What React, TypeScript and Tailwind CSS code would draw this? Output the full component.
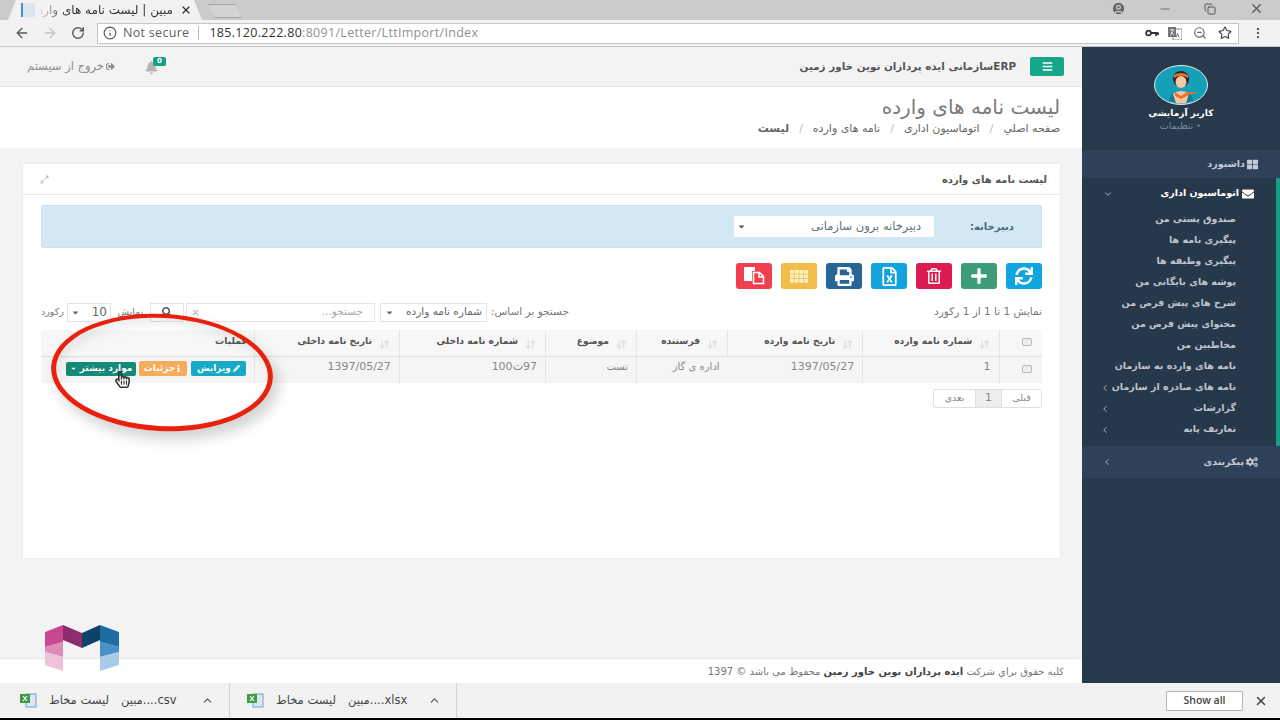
import { ArrowDownUp, ArrowLeft, ArrowRight, ChevronDown, ChevronLeft, ChevronUp, CircleUser, Copy, EllipsisVertical, Info, Minus, RotateCw, Star, X, ZoomOut } from "lucide-react";
import {
  FaBars,
  FaBell,
  FaCaretDown,
  FaCogs,
  FaEnvelope,
  FaExpandAlt,
  FaInfo,
  FaPencilAlt,
  FaPlus,
  FaPrint,
  FaRegFileExcel,
  FaRegHandPointer,
  FaRegTrashAlt,
  FaSearch,
  FaSignOutAlt,
  FaSync,
  FaThLarge,
  FaTimes,
} from "react-icons/fa";

const subMenu = [
  { label: "صندوق پستی من" },
  { label: "پیگیری نامه ها" },
  { label: "پیگیری وظیفه ها" },
  { label: "پوشه های بایگانی من" },
  { label: "شرح های پیش فرض من" },
  { label: "محتوای پیش فرض من" },
  { label: "مخاطبین من" },
  { label: "نامه های وارده به سازمان" },
  { label: "نامه های صادره از سازمان", arrow: true },
  { label: "گزارشات", arrow: true },
  { label: "تعاریف پایه", arrow: true },
];

const columns = [
  { label: "عملیات", width: "w-[213px]", sort: false },
  { label: "تاریخ نامه داخلی", width: "w-[145px]", sort: true },
  { label: "شماره نامه داخلی", width: "w-[146px]", sort: true },
  { label: "موضوع", width: "w-[91px]", sort: true },
  { label: "فرستنده", width: "w-[91px]", sort: true },
  { label: "تاریخ نامه وارده", width: "w-[135px]", sort: true },
  { label: "شماره نامه وارده", width: "w-[137px]", sort: true },
];

const PasteIcon = () => (
  <svg width="22" height="18" viewBox="0 0 22 18">
    <path d="M1 0h11v4h-3v10H1z" fill="#fff" />
    <path d="M10.5 5.5h6l4 4v7h-10z" fill="none" stroke="#fff" strokeWidth="1.6" />
    <path d="M16 5v5h5" fill="none" stroke="#fff" strokeWidth="1.4" />
  </svg>
);

const GridIcon = () => (
  <svg width="18" height="13" viewBox="0 0 18 13" fill="#fdf0c4">
    {[0, 4.5, 9].map((y) =>
      [0, 4.7, 9.4, 14.1].map((x) => <rect key={`${x}-${y}`} x={x} y={y} width="3.9" height="3.7" />),
    )}
  </svg>
);

const toolButtons = [
  { icon: <PasteIcon />, color: "bg-[#f0404f]" },
  { icon: <GridIcon />, color: "bg-[#f2be49]" },
  { icon: <FaPrint size={19} />, color: "bg-[#266596]" },
  { icon: <FaRegFileExcel size={19} />, color: "bg-[#12a3df]" },
  { icon: <FaRegTrashAlt size={16} />, color: "bg-[#dc1c50]" },
  { icon: <FaPlus size={18} />, color: "bg-[#3d9c78]" },
  { icon: <FaSync size={18} />, color: "bg-[#0fa5e0]" },
];

const Checkbox = () => <span className="ml-[12px] inline-block h-[8px] w-[10px] rounded-[2px] border border-[#b8b8b8] bg-[#eeeeee]" />;

const ExcelIcon = () => (
  <svg width="17" height="15" viewBox="0 0 17 15">
    <rect x="6" y="1" width="10" height="13" fill="#dbe8f3" stroke="#7b9cba" />
    <rect x="0" y="1" width="10" height="9" fill="#3f9c46" />
    <path d="M3 3l4 5M7 3l-4 5" stroke="#fff" strokeWidth="1.2" />
  </svg>
);

const KeyIcon = () => (
  <svg width="14" height="8" viewBox="0 0 14 8" fill="none" stroke="#333" strokeWidth="1.8">
    <circle cx="3.5" cy="4" r="2.4" />
    <path d="M6 4h7.5M11 4v3M13 4v2" />
  </svg>
);

const TranslateIcon = () => (
  <svg width="14" height="13" viewBox="0 0 14 13">
    <rect x="5" y="2" width="9" height="11" fill="#fff" stroke="#888" />
    <rect x="0" y="0" width="8" height="10" fill="#777" />
    <path d="M2 3h4M4 2v1M2.5 8L5.5 3M3 5l3 3" stroke="#fff" strokeWidth="0.8" fill="none" />
    <path d="M8 10.5l1.5-4 1.5 4" stroke="#666" strokeWidth="0.9" fill="none" />
  </svg>
);

const Avatar = () => (
  <svg className="h-[40px] w-[54px]" viewBox="0 0 54 40" preserveAspectRatio="none">
    <ellipse cx="27" cy="20" rx="26.5" ry="19.5" fill="#15a0b8" stroke="#d5eef2" strokeWidth="1" />
    <ellipse cx="27" cy="14" rx="8" ry="8" fill="#2a2326" />
    <path d="M19.5 11c3-4 12-4 15 0l-1 2c-4-3-9-3-13 0z" fill="#e8742c" />
    <ellipse cx="27" cy="17" rx="5.5" ry="6" fill="#f6c7a6" />
    <path d="M16 37c1-8 6-11 11-11s10 3 11 11c-7 2-15 2-22 0z" fill="#f6c7a6" />
    <path d="M21 27l6 4 6-4 10 0-10 4-6 3-6-3z" fill="#e8742c" />
    <path d="M19 29c-3 1-4 4-4 7 3 1 5 2 7 2zM35 29c3 1 4 4 4 7-3 1-5 2-7 2z" fill="#0f7f96" />
  </svg>
);

const Logo = () => (
  <svg className="absolute left-[45px] top-[625px] h-[46px] w-[74px]" viewBox="0 0 74 46">
    <polygon points="0,7 18,0 18,17 0,22" fill="#c9478f" />
    <polygon points="0,22 18,17 18,32 0,27" fill="#de8bb9" />
    <polygon points="0,27 18,32 18,46 0,40" fill="#efc2da" />
    <polygon points="18,0 37,8 37,23 18,15" fill="#8c2e6e" />
    <polygon points="37,8 55,0 55,15 37,23" fill="#0e4269" />
    <polygon points="55,0 74,7 74,22 55,17" fill="#1f6ca3" />
    <polygon points="55,17 74,22 74,27 55,32" fill="#4a90c9" />
    <polygon points="55,32 74,27 74,40 55,46" fill="#a9cbe9" />
  </svg>
);

const BrowserTop = () => (
  <>
    <div className="flex h-[20px] items-end bg-[#cbcbcb] pl-[8px]">
      <div className="flex h-[20px] w-[194px] items-center bg-[#f2f2f2] pl-[13px] pr-[10px] [clip-path:polygon(0_100%,8px_0,186px_0,100%_100%)]">
        <span className="h-[14px] w-[14px] shrink-0 border-l-2 border-[#4b8fd0] bg-[#dde6ee]" />
        <span dir="rtl" className="ml-[2px] flex-1 overflow-hidden whitespace-nowrap text-[12px] text-[#333] [mask-image:linear-gradient(to_right,transparent,black_30px)]">
          مبین | لیست نامه های وارده
        </span>
        <X size={12} strokeWidth={2.5} className="ml-[7px] shrink-0 text-[#333]" />
      </div>
      <div className="ml-[6px] mb-[2px] h-[14px] w-[34px] border border-[#a8a8a8] bg-[#d2d2d2] [clip-path:polygon(0_0,80%_0,100%_100%,20%_100%)]" />
      <div className="flex-1" />
      <div className="mb-[4px] flex w-[172px] items-center text-[#555]">
        <CircleUser size={15} fill="#666" stroke="#cbcbcb" className="ml-[3px]" />
        <Minus size={14} className="ml-[32px] text-[#777]" />
        <Copy size={12} className="ml-[32px]" />
        <X size={15} className="ml-[33px]" />
      </div>
    </div>
    <div className="flex h-[27px] items-center border-b border-[#c8c8c8] bg-[#f2f2f2] pl-[14px]">
      <ArrowLeft size={16} className="text-[#5a5a5a]" />
      <ArrowRight size={16} className="ml-[12px] text-[#c6c6c6]" />
      <RotateCw size={14} strokeWidth={2.5} className="ml-[13px] text-[#5a5a5a]" />
      <div className="ml-[12px] flex h-[21px] w-[1142px] items-center border border-[#c6c6c6] bg-white pl-[5px] pr-[6px] font-['Open_Sans',sans-serif] text-[12.5px] tracking-[0.3px]">
        <Info size={14} className="text-[#555]" />
        <span className="ml-[6px] text-[#5f5f5f]">Not secure</span>
        <span className="ml-[9px] h-[14px] w-px bg-[#bbbbbb]" />
        <span className="ml-[10px] text-[#333]">185.120.222.80</span>
        <span className="text-[#909090]">:8091/Letter/LttImport/Index</span>
        <div className="flex-1" />
        <KeyIcon />
        <span className="ml-[9px] flex"><TranslateIcon /></span>
        <ZoomOut size={14} className="ml-[11px] text-[#666]" />
        <Star size={14} className="ml-[11px] text-[#444]" />
      </div>
      <EllipsisVertical size={14} className="ml-[12px] text-[#555]" />
    </div>
  </>
);

const Sidebar = () => (
  <aside dir="rtl" className="flex w-[198px] shrink-0 flex-col bg-[#28394c] text-[9.5px]">
    <div className="flex h-[103px] flex-col items-center pt-[18px]">
      <Avatar />
      <div className="mt-[2px] text-[9px] font-bold leading-[13px] text-white">کاربر آزمایشی</div>
      <div className="flex items-center gap-[2px] text-[9.5px] leading-[11px] text-[#7e8a99]">
        <FaCaretDown size={7} /> تنظیمات
      </div>
    </div>
    <div className="flex h-[28px] items-center bg-[#2f4059] pr-[22px] font-semibold text-[#c3cad3]">
      <FaThLarge size={11} className="ml-[2px]" /> داشبورد
    </div>
    <div className="flex h-[268px] flex-col border-r-[4px] border-[#14a085] bg-[#27384a]">
      <div className="flex h-[31px] shrink-0 items-center justify-between pl-[21px] pr-[22px] font-bold text-white">
        <span className="flex items-center gap-[3px]">
          <FaEnvelope size={12} /> اتوماسیون اداری
        </span>
        <ChevronDown size={10} className="text-[#c3cad3]" />
      </div>
      {subMenu.map((item) => (
        <div key={item.label} className="flex h-[21px] shrink-0 items-center justify-between pl-[18px] pr-[40px] font-semibold whitespace-nowrap text-[#bcc4ce]">
          <span>{item.label}</span>
          {item.arrow && <ChevronLeft size={10} />}
        </div>
      ))}
    </div>
    <div className="flex h-[32px] items-center justify-between bg-[#2f4059] pl-[20px] pr-[22px] font-semibold text-[#c3cad3]">
      <span className="flex items-center gap-[2px]">
        <FaCogs size={12} /> پیکربندی
      </span>
      <ChevronLeft size={10} />
    </div>
  </aside>
);

const TopNav = () => (
  <div className="flex h-[40px] items-center border-b border-[#e4e4e4] bg-[#f3f3f3] pl-[27px] pr-[18px]">
    <div className="flex items-center gap-[2px] text-[11.5px] text-[#8d8d8d]">
      <span>خروج از سیستم</span>
      <FaSignOutAlt size={9} />
    </div>
    <div className="relative ml-[30px] mt-[1px] text-[#b5b5b5]">
      <FaBell size={13} />
      <span className="absolute -right-[8px] -top-[4px] flex h-[9px] w-[13px] items-center justify-center rounded-[2px] bg-[#14a085] text-[7px] font-bold text-white">0</span>
    </div>
    <div className="flex-1" />
    <span dir="rtl" className="text-[10.4px] font-semibold text-[#555]">ERPسازمانی ایده پردازان نوین خاور زمین</span>
    <button className="ml-[14px] flex h-[19px] w-[34px] items-center justify-center rounded-[2px] bg-[#16a689] text-white">
      <FaBars size={11} />
    </button>
  </div>
);

const PageTitle = () => (
  <div dir="rtl" className="h-[61px] bg-white pr-[22px] pt-[8px]">
    <h1 className="text-[20px] leading-[24px] text-[#7b7b7b]">لیست نامه های وارده</h1>
    <div className="mt-[2px] flex items-center gap-[10px] text-[11px] text-[#666]">
      <span>صفحه اصلي</span>
      <span className="text-[#bbb]">/</span>
      <span>اتوماسیون اداری</span>
      <span className="text-[#bbb]">/</span>
      <span>نامه های وارده</span>
      <span className="text-[#bbb]">/</span>
      <span className="font-bold">لیست</span>
    </div>
  </div>
);

const Filters = () => (
  <div className="mt-[14px] flex h-[18px] items-center justify-between text-[10.5px] text-[#777]">
    <div className="flex items-center">
      <span className="w-[26px] text-[9.5px]">رکورد</span>
      <div className="flex h-[19px] w-[44px] items-center justify-between border border-[#e4e4e4] px-[3px] text-[#666]">
        <FaCaretDown size={9} />
        <span className="text-[12px]">10</span>
      </div>
      <span className="ml-[3px] w-[33px] text-center text-[9.5px]">نمایش</span>
      <div className="ml-[3px] flex h-[19px] w-[34px] items-center justify-center border border-[#e4e4e4]">
        <FaSearch size={10} className="text-[#555]" />
      </div>
      <div dir="rtl" className="ml-[2px] flex h-[19px] w-[189px] items-center justify-between border border-[#e4e4e4] px-[11px] text-[#aaa]">
        <span>جستجو...</span>
        <FaTimes size={9} className="-ml-[7px] text-[#ccc]" />
      </div>
      <div dir="rtl" className="ml-[5px] flex h-[19px] w-[107px] items-center justify-between border border-[#e4e4e4] px-[4px] text-[#666]">
        <span className="whitespace-nowrap">شماره نامه وارده</span>
        <FaCaretDown size={9} />
      </div>
      <span dir="rtl" className="ml-[4px] whitespace-nowrap text-[10.5px]">جستجو بر اساس:</span>
    </div>
    <span dir="rtl" className="whitespace-nowrap">نمایش 1 تا 1 از 1 رکورد</span>
  </div>
);

const DataTable = () => (
  <table dir="ltr" className="mt-[9px] w-[1001px] table-fixed border-collapse text-[11px] text-[#888]">
    <thead>
      <tr className="h-[26px] bg-[#f7f7f7]">
        {columns.map((col) => (
          <th key={col.label} className={`${col.width} border-r border-[#e6e6e6] p-0 align-top`}>
            <div dir="rtl" className={`flex pt-[4px] text-[9.2px] font-bold text-[#555] ${col.sort ? "pr-[9px]" : "pr-[6px]"}`}>
              {col.sort && <ArrowDownUp size={11} strokeWidth={2.5} className="ml-[7px] mt-[5px] text-[#dcdcdc]" />}
              <span className="whitespace-nowrap">{col.label}</span>
            </div>
          </th>
        ))}
        <th className="w-[42px] p-0 text-center">
          <Checkbox />
        </th>
      </tr>
    </thead>
    <tbody>
      <tr className="h-[27px] border-t border-[#dedede] bg-[#f5f5f5]">
        <td className="border-r border-[#e6e6e6] p-0">
          <div className="ml-[25px] flex items-center gap-[3px] pb-[2px] text-[9px] font-bold text-white">
            <span className="flex h-[14px] w-[70px] items-center justify-center gap-[3px] rounded-[2px] bg-[#148a78]">
              <FaCaretDown size={7} /> موارد بیشتر
            </span>
            <span className="flex h-[15px] w-[48px] items-center justify-center rounded-[2px] bg-[#f5ad5b]">
              جزئیات <FaInfo size={7} />
            </span>
            <span className="ml-[1px] flex h-[15px] w-[55px] items-center justify-center gap-[2px] rounded-[2px] bg-[#17a9c6]">
              ویرایش <FaPencilAlt size={7} />
            </span>
          </div>
        </td>
        <td className="border-r border-[#e6e6e6] p-0 pr-[8px] pb-[6px] text-right">1397/05/27</td>
        <td dir="rtl" className="border-l border-[#e6e6e6] p-0 pr-[8px] pb-[6px]">97ت100</td>
        <td dir="rtl" className="border-l border-[#e6e6e6] p-0 pr-[8px] pb-[6px] text-[10px]">تست</td>
        <td dir="rtl" className="border-l border-[#e6e6e6] p-0 pr-[8px] pb-[6px] text-[10px]">اداره ی گاز</td>
        <td className="border-r border-[#e6e6e6] p-0 pr-[8px] pb-[6px] text-right">1397/05/27</td>
        <td className="border-r border-[#e6e6e6] p-0 pr-[9px] pb-[6px] text-right">1</td>
        <td className="p-0 text-center">
          <Checkbox />
        </td>
      </tr>
    </tbody>
  </table>
);

const Card = () => (
  <section className="h-[394px] bg-white shadow-[0_0_2px_rgba(0,0,0,0.08)]">
    <div className="flex h-[31px] items-center justify-between border-b border-[#e8e8e8] pl-[17px] pr-[13px]">
      <FaExpandAlt size={9} className="text-[#c4c4c4]" />
      <span className="text-[10px] font-bold text-[#555]">لیست نامه های وارده</span>
    </div>
    <div className="px-[18px] pt-[10px]">
      <div className="flex h-[43px] items-center justify-end rounded-[2px] border border-[#c6e2ef] bg-[#d3e8f3] pr-[27px] text-[10px] font-semibold text-[#4a6a7a]">
        <div dir="rtl" className="mr-[36px] flex h-[21px] w-[200px] items-center justify-between bg-white pl-[3px] pr-[13px] text-[11.5px] font-normal text-[#5f6f78]">
          <span>دبیرخانه برون سازمانی</span>
          <FaCaretDown size={9} className="text-[#555]" />
        </div>
        <span dir="rtl">دبیرخانه:</span>
      </div>
      <div className="mt-[15px] flex justify-end gap-[9px]">
        {toolButtons.map((btn, i) => (
          <button key={i} className={`flex h-[26px] w-[36px] items-center justify-center rounded-[3px] text-white ${btn.color}`}>
            {btn.icon}
          </button>
        ))}
      </div>
      <Filters />
      <DataTable />
      <div className="mt-[6px] flex justify-end">
        <div dir="rtl" className="flex h-[19px] items-center rounded-[2px] border border-[#e0e0e0] text-[9.5px] text-[#888]">
          <span className="flex h-full w-[39px] items-center justify-center">قبلی</span>
          <span className="flex h-full w-[27px] items-center justify-center border-x border-[#e0e0e0] bg-[#eeeeee] text-[11px]">1</span>
          <span className="flex h-full w-[41px] items-center justify-center">بعدی</span>
        </div>
      </div>
    </div>
  </section>
);

const DownloadItem = ({ name }: { name: string }) => (
  <div className="flex h-[35px] w-[210px] items-center border-r border-[#d4d4d4] pr-[15px] text-[11.5px] text-[#444]">
    <ExcelIcon />
    <span dir="rtl" className="ml-[12px] whitespace-nowrap">لیست مخاط</span>
    <span dir="ltr" className="ml-[12px] whitespace-nowrap">{name}</span>
    <ChevronUp size={13} className="ml-auto text-[#555]" />
  </div>
);

const App = () => (
  <div className="relative flex h-[720px] w-[1280px] flex-col overflow-hidden bg-white font-['DejaVu_Sans',sans-serif]">
    <BrowserTop />
    <main className="flex h-[636px] shrink-0">
      <div className="flex w-[1082px] flex-col">
        <TopNav />
        <PageTitle />
        <div className="flex-1 bg-[#f3f3f3] pl-[23px] pr-[22px] pt-[16px]">
          <Card />
        </div>
        <footer dir="rtl" className="flex h-[25px] items-center border-t border-[#e6e6e6] bg-white pr-[18px] text-[10px] text-[#777]">
          کلیه حقوق براي شرکت&nbsp;<b className="text-[#444]">ایده پردازان نوین خاور زمین</b>&nbsp;محفوظ مي باشد © 1397
        </footer>
      </div>
      <Sidebar />
    </main>
    <div className="flex h-[35px] items-center bg-[#f2f2f2] pl-[20px] pr-[12px]">
      <DownloadItem name="مبین....csv" />
      <div className="w-[17px]" />
      <DownloadItem name="مبین....xlsx" />
      <div className="flex-1" />
      <button className="h-[20px] w-[77px] rounded-[1px] border border-[#b5b5b5] bg-white font-['Open_Sans',sans-serif] text-[10.5px] font-semibold text-[#444]">Show all</button>
      <X size={14} strokeWidth={2.5} className="ml-[11px] text-[#444]" />
    </div>
    <div className="h-[2px] bg-black" />

    {/* red marker drawn over the video */}
    <div className="pointer-events-none absolute left-[51px] top-[314px] h-[117px] w-[222px] rotate-[3deg] rounded-[50%] border-[5px] border-t-[4px] border-[#e8210f] shadow-[6px_8px_14px_rgba(0,0,0,0.18),inset_3px_6px_12px_rgba(0,0,0,0.08)]" />
    <FaRegHandPointer size={17} className="absolute left-[114px] top-[371px] text-[#333]" />
    <Logo />
  </div>
);

export default App;
